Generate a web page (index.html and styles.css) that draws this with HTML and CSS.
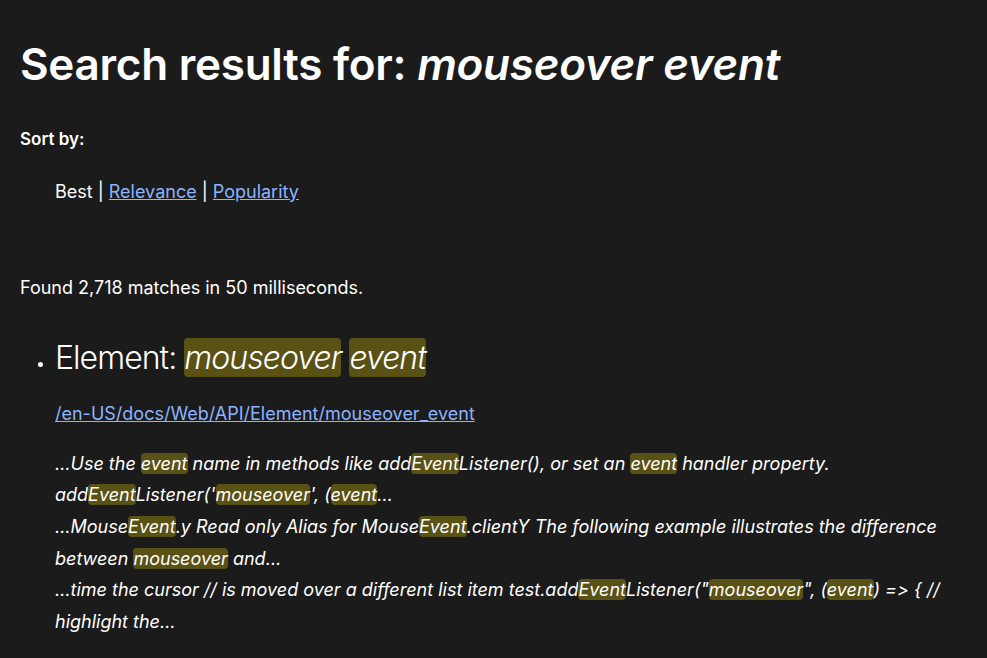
FILE: index.html
```html
<!DOCTYPE html>
<html lang="en">
<head>
<meta charset="utf-8">
<title>Search results for: mouseover event</title>
<link rel="stylesheet" href="styles.css">
</head>
<body>
<main class="page">
  <h1 class="title">Search results for: <em>mouseover event</em></h1>
  <p class="sort-label">Sort by:</p>
  <ul class="sort-options">
    <li>Best <span class="sep">|</span> <a href="#">Relevance</a> <span class="sep">|</span> <a href="#">Popularity</a></li>
  </ul>
  <p class="found">Found 2,718 matches in 50 milliseconds.</p>
  <ul class="results">
    <li class="result">
      <h2 class="result-title">Element: <em><mark>mouseover</mark> <mark>event</mark></em></h2>
      <a class="result-link" href="#">/en-US/docs/Web/API/Element/mouseover_event</a>
      <div class="excerpts">
        <p class="excerpt">…Use the <mark>event</mark> name in methods like add<mark>Event</mark>Listener(), or set an <mark>event</mark> handler property. add<mark>Event</mark>Listener('<mark>mouseover</mark>', (<mark>event</mark>…</p>
        <p class="excerpt">…Mouse<mark>Event</mark>.y Read only Alias for Mouse<mark>Event</mark>.clientY The following example illustrates the difference between <mark>mouseover</mark> and…</p>
        <p class="excerpt">…time the cursor // is moved over a different list item test.add<mark>Event</mark>Listener("<mark>mouseover</mark>", (<mark>event</mark>) =&gt; { // highlight the…</p>
      </div>
    </li>
  </ul>
</main>
</body>
</html>
```

FILE: styles.css
```css
html, body {
  margin: 0;
  background: #1b1b1b;
  color: #ffffff;
  font-family: Inter, "Noto Sans", sans-serif;
  font-variant-ligatures: none;
  font-feature-settings: "calt" 0;
}

.page {
  padding: 38px 20px 0;
  width: 930px;
}

.title {
  margin: 0;
  font-size: 44px;
  line-height: 52.8px;
  font-weight: 600;
  letter-spacing: -0.25px;
}

.title em {
  font-style: italic;
}

.sort-label {
  margin: 36px 0 0;
  font-size: 17px;
  line-height: 24px;
  font-weight: 600;
}

.sort-options {
  list-style: none;
  margin: 27px 0 0;
  padding-left: 35px;
  font-size: 18px;
  line-height: 27px;
}

a {
  color: #8cb4ff;
}

.found {
  margin: 69px 0 0;
  font-size: 18px;
  line-height: 27px;
}

.results {
  margin: 38px 0 0;
  padding-left: 35px;
  font-size: 16px;
}

.result-title {
  margin: 0;
  font-size: 32px;
  line-height: 38px;
  font-weight: 300;
  letter-spacing: -0.96px;
}

mark {
  background: #5a5115;
  color: #ffffff;
  border-radius: 4px;
}

.result-link {
  display: inline-block;
  margin-top: 23px;
  font-size: 18px;
  line-height: 27px;
}

.excerpts {
  margin-top: 21px;
}

.excerpt {
  margin: 0;
  font-size: 18px;
  line-height: 31.6px;
  font-style: italic;
}
```
